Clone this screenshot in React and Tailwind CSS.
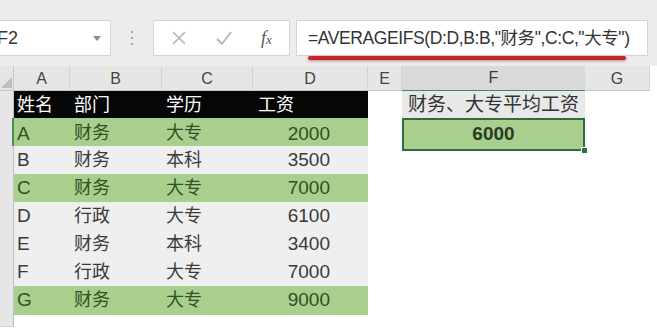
import React from 'react';

const COLS = 'grid grid-cols-[14px_56px_92px_91px_115px_34px_183px_65px_1fr]';

const rows = [
  { name: 'A', dept: '财务', edu: '大专', pay: 2000, green: true },
  { name: 'B', dept: '财务', edu: '本科', pay: 3500 },
  { name: 'C', dept: '财务', edu: '大专', pay: 7000, green: true },
  { name: 'D', dept: '行政', edu: '大专', pay: 6100 },
  { name: 'E', dept: '财务', edu: '本科', pay: 3400 },
  { name: 'F', dept: '行政', edu: '大专', pay: 7000 },
  { name: 'G', dept: '财务', edu: '大专', pay: 9000, green: true },
];

const Toolbar = () => (
  <div className="relative h-[66px] bg-[#ececec] flex items-start pt-[20px]">
    {/* name box */}
    <div className="-ml-[5px] w-[116px] h-[36px] bg-white border border-[#d4d4d4] flex items-center justify-between pr-[9px]">
      <span className="text-[18px] text-[#333] pl-[1px]">F2</span>
      <svg width="8" height="5" viewBox="0 0 8 5">
        <path d="M0 0h8L4 5z" fill="#8a8a8a" />
      </svg>
    </div>
    {/* grip dots */}
    <div className="w-[42px] h-[36px] flex flex-col items-center justify-center gap-[4px]">
      <span className="w-[2px] h-[2px] bg-[#a8a8a8]" />
      <span className="w-[2px] h-[2px] bg-[#a8a8a8]" />
      <span className="w-[2px] h-[2px] bg-[#a8a8a8]" />
    </div>
    {/* cancel / enter / fx */}
    <div className="w-[137px] h-[36px] bg-white border border-[#d4d4d4] flex items-center pl-[17px] gap-[28px]">
      <svg width="16" height="16" viewBox="0 0 16 16">
        <path d="M2 2l12 12M14 2L2 14" stroke="#b4b4b4" strokeWidth="1.6" />
      </svg>
      <svg width="18" height="16" viewBox="0 0 18 16">
        <path d="M2 9l5 5L16 2" stroke="#b4b4b4" strokeWidth="1.8" fill="none" />
      </svg>
      <span className="font-['Liberation_Serif',serif] italic text-[18px] text-[#555] leading-none">
        f<span className="text-[13px]">x</span>
      </span>
    </div>
    {/* formula */}
    <div className="ml-[6px] w-[352px] h-[36px] bg-white border border-[#d4d4d4] flex items-center pl-[11px]">
      <span className="text-[17.5px] text-[#333] tracking-[-0.4px] whitespace-nowrap">
        =AVERAGEIFS(D:D,B:B,"财务",C:C,"大专")
      </span>
    </div>
    {/* red hand-drawn underline */}
    <div className="absolute left-[308px] top-[56px] w-[318px] h-[4px] rounded-full bg-[#c3262b] shadow-[0_1px_3px_rgba(160,30,30,0.5)]" />
  </div>
);

const ColHeader = () => (
  <div className={`${COLS} h-[25px] bg-[#e6e6e6] border-b border-[#c8c8c8] text-[16px] text-[#444]`}>
    <div className="relative border-r border-[#c8c8c8]">
      <svg className="absolute left-[1px] bottom-[4px]" width="11" height="11" viewBox="0 0 11 11">
        <path d="M11 0v11H0z" fill="#bdbdbd" />
      </svg>
    </div>
    {['A', 'B', 'C', 'D', 'E'].map((c) => (
      <div key={c} className="flex items-center justify-center border-r border-[#d2d2d2]">{c}</div>
    ))}
    <div className="flex items-center justify-center bg-[#d9d9d9] border-b-2 border-[#3f8a5a] text-[#3a3a3a]">F</div>
    <div className="flex items-center justify-center border-r border-[#d2d2d2]">G</div>
    <div className="bg-white" />
  </div>
);

const RowHead = ({ active }) => (
  <div className={`bg-[#e6e6e6] border-b border-[#d0d0d0] ${active ? 'border-r-2 border-r-[#4f8a5e]' : 'border-r border-r-[#c0c0c0]'}`} />
);

const HeaderRow = () => (
  <div className={`${COLS} h-[27px] text-[18px]`}>
    <RowHead />
    <div className="bg-[#060606] text-white pl-[3px] flex items-center">姓名</div>
    <div className="bg-[#060606] text-white pl-[4px] flex items-center">部门</div>
    <div className="bg-[#060606] text-white pl-[4px] flex items-center">学历</div>
    <div className="bg-[#060606] text-white pl-[5px] flex items-center">工资</div>
    <div className="bg-white" />
    <div className="bg-[#e8e8e8] text-[#333] text-[19px] flex items-center justify-center whitespace-nowrap">财务、大专平均工资</div>
    <div className="bg-white" />
    <div className="bg-white" />
  </div>
);

const DataRow = ({ r, i }) => {
  const bg = r.green ? 'bg-[#a9cf8f] text-[#2f4f24]' : 'bg-[#efefef] text-[#3a3a3a]';
  return (
    <div className={`${COLS} h-[28px] text-[18px]`}>
      <RowHead active={i === 0} />
      <div className={`${bg} border-b border-white pl-[3px] flex items-center text-[19px]`}>{r.name}</div>
      <div className={`${bg} border-b border-white pl-[4px] flex items-center`}>{r.dept}</div>
      <div className={`${bg} border-b border-white pl-[4px] flex items-center`}>{r.edu}</div>
      <div className={`${bg} border-b border-white pr-[38px] flex items-center justify-end text-[19px]`}>{r.pay}</div>
      <div className="bg-white" />
      {i === 0 ? (
        <div className="relative bg-[#a9cf8f] border-2 border-[#2f6d3e] flex items-center justify-center text-[19px] font-semibold text-[#2a3a26]">
          6000
          <span className="absolute -right-[5px] -bottom-[5px] w-[7px] h-[7px] bg-[#2f6d3e] border border-white" />
        </div>
      ) : (
        <div className="bg-white" />
      )}
      <div className="bg-white" />
      <div className="bg-white" />
    </div>
  );
};

export default function App() {
  return (
    <div className="w-[657px] h-[328px] overflow-hidden bg-white font-['Liberation_Sans','Noto_Sans_CJK_SC',sans-serif]">
      <Toolbar />
      <ColHeader />
      <HeaderRow />
      {rows.map((r, i) => (
        <DataRow key={r.name} r={r} i={i} />
      ))}
      <div className={`${COLS} h-[13px]`}>
        <RowHead />
      </div>
    </div>
  );
}
